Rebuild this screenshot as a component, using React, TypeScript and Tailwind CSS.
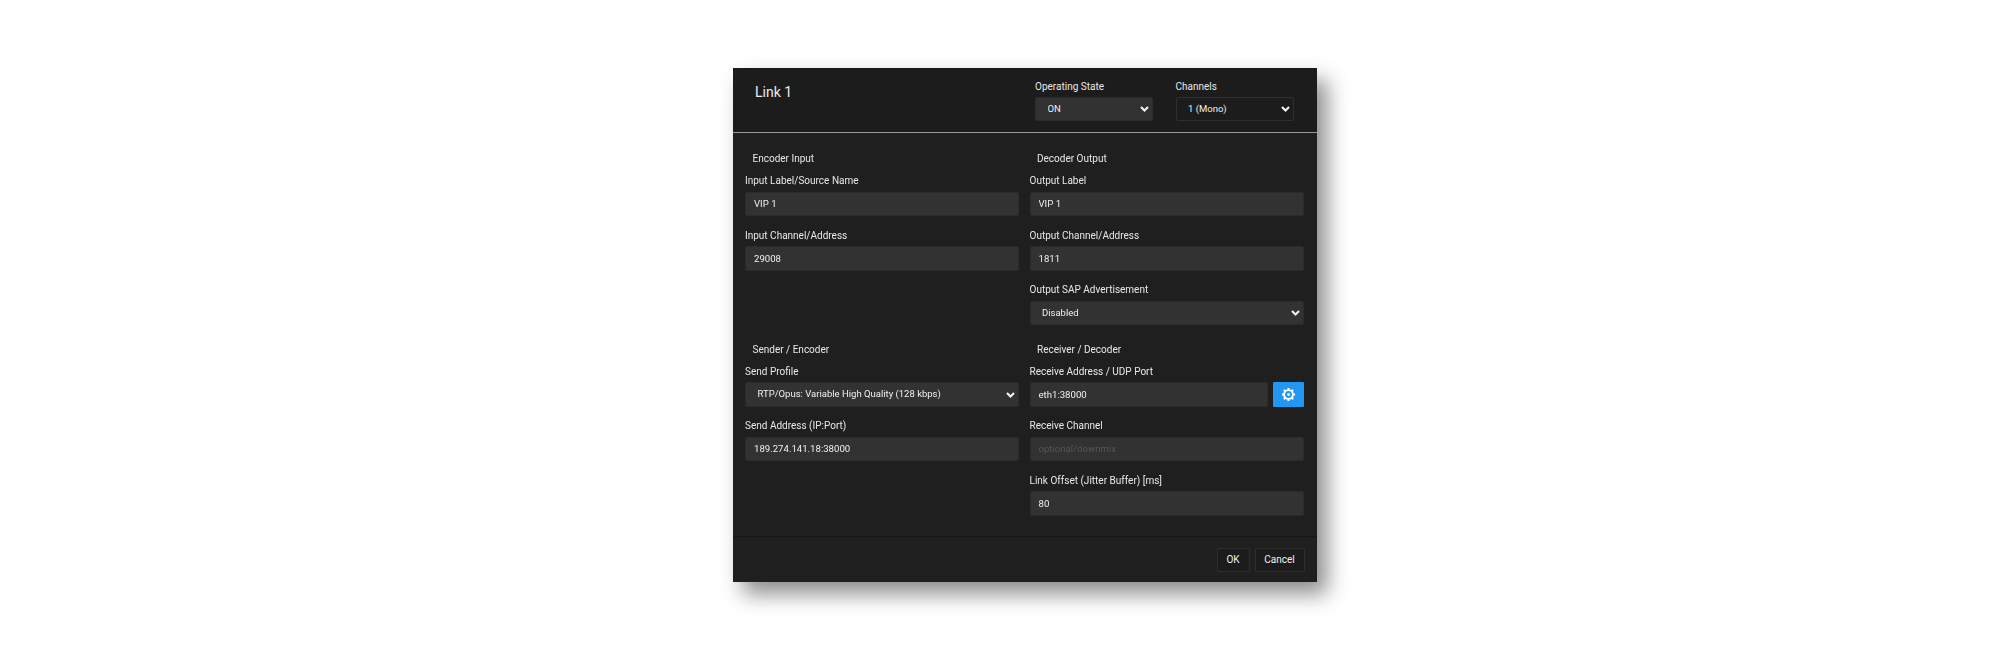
import React from "react";

const labelCls = "block h-4 mb-[2.5px] text-[10px] leading-4 text-[#e8e8e8]";
const fieldBox =
  "block w-full h-[24.5px] rounded-[2px] border border-[#2b2b2b] bg-[#323232] text-[9.6px] text-[#f0f0f0] outline-none";

function Chevron() {
  return (
    <svg width="9" height="6" viewBox="0 0 9 6" fill="none" stroke="#f4f4f4" strokeWidth="2.1" className="absolute right-[4px] top-[9.5px] pointer-events-none">
      <path d="M1 1L4.5 4.5L8 1" />
    </svg>
  );
}

function Select({ value, className = "" }: { value: string; className?: string }) {
  return (
    <div className="relative">
      <select
        defaultValue={value}
        className={`block w-full h-[24.5px] appearance-none rounded-[2px] border pl-[11.5px] text-[9.5px] text-[#f0f0f0] outline-none ${className || "border-[#2b2b2b] bg-[#323232]"}`}
      >
        <option>{value}</option>
      </select>
      <Chevron />
    </div>
  );
}

function Input({ value, placeholder }: { value?: string; placeholder?: string }) {
  return (
    <input
      readOnly
      defaultValue={value}
      placeholder={placeholder}
      className={`${fieldBox} pl-[8px] placeholder:text-[#555555]`}
    />
  );
}

function Field({ label, children }: { label: string; children: React.ReactNode }) {
  return (
    <div className="mb-[11.5px]">
      <label className={labelCls}>{label}</label>
      {children}
    </div>
  );
}

function SectionTitle({ children, mb }: { children: string; mb: string }) {
  return <div className={`h-4 pl-[7.5px] text-[10px] leading-4 text-[#e8e8e8] ${mb}`}>{children}</div>;
}

function FooterButton({ children, w }: { children: string; w: string }) {
  return (
    <button className={`h-6 ${w} rounded-[2px] border border-[#2f2f2f] bg-[#1c1c1c] text-[10px] text-[#f0f0f0]`}>
      {children}
    </button>
  );
}

function Gear() {
  return (
    <svg width="15" height="15" viewBox="0 0 24 24" fill="none" stroke="#ffffff">
      <circle cx="12" cy="12" r="7" strokeWidth="3" />
      <path strokeWidth="3.4" d="M12 1.5V5M12 19v3.5M1.5 12H5M19 12h3.5M4.6 4.6l2.5 2.5M16.9 16.9l2.5 2.5M4.6 19.4l2.5-2.5M16.9 7.1l2.5-2.5" />
      <circle cx="12" cy="12" r="2.2" fill="#ffffff" stroke="none" />
    </svg>
  );
}

export default function App() {
  return (
    <div className="min-h-screen bg-white pl-[733px] pt-[68px] font-['Roboto',sans-serif]">
      <div className="w-[584px] bg-[#1f1f1f] shadow-[10px_12px_20px_rgba(0,0,0,0.45)] blur-[0.35px]">
        <header className="box-content flex h-[63.5px] border-b-[1.5px] border-[#9a9a9a] bg-[#1c1c1c]">
          <div className="w-[302px] pl-[22px] pt-[15px] text-[14px] leading-[18px] text-[#ececec]">Link 1</div>
          <div className="w-[118px] pt-[11px]">
            <div className="h-4 mb-[1.5px] text-[10px] leading-4 text-[#e8e8e8]">Operating State</div>
            <Select value="ON" />
          </div>
          <div className="ml-[22.5px] w-[118.5px] pt-[11px]">
            <div className="h-4 mb-[1.5px] text-[10px] leading-4 text-[#e8e8e8]">Channels</div>
            <Select value="1 (Mono)" className="border-[#2f2f2f] bg-[#1c1c1c]" />
          </div>
        </header>

        <div className="px-[12px] pt-[18px] pb-[9px]">
          <section className="grid grid-cols-[273.5px_274.5px] gap-x-[11px]">
            <div>
              <SectionTitle mb="mb-[6.5px]">Encoder Input</SectionTitle>
              <Field label="Input Label/Source Name"><Input value="VIP 1" /></Field>
              <Field label="Input Channel/Address"><Input value="29008" /></Field>
            </div>
            <div>
              <SectionTitle mb="mb-[6.5px]">Decoder Output</SectionTitle>
              <Field label="Output Label"><Input value="VIP 1" /></Field>
              <Field label="Output Channel/Address"><Input value="1811" /></Field>
              <Field label="Output SAP Advertisement"><Select value="Disabled" /></Field>
            </div>
          </section>
          <section className="mt-[5.5px] grid grid-cols-[273.5px_274.5px] gap-x-[11px]">
            <div>
              <SectionTitle mb="mb-[5.5px]">Sender / Encoder</SectionTitle>
              <Field label="Send Profile"><Select value="RTP/Opus: Variable High Quality (128 kbps)" /></Field>
              <Field label="Send Address (IP:Port)"><Input value="189.274.141.18:38000" /></Field>
            </div>
            <div>
              <SectionTitle mb="mb-[5.5px]">Receiver / Decoder</SectionTitle>
              <Field label="Receive Address / UDP Port">
                <div className="flex gap-[5px]">
                  <div className="flex-1"><Input value="eth1:38000" /></div>
                  <button className="flex h-[24.5px] w-[31.5px] items-center justify-center rounded-[1px] bg-[#2196f3]">
                    <Gear />
                  </button>
                </div>
              </Field>
              <Field label="Receive Channel"><Input placeholder="optional/downmix" /></Field>
              <Field label="Link Offset (Jitter Buffer) [ms]"><Input value="80" /></Field>
            </div>
          </section>
        </div>

        <footer className="flex justify-end gap-[5px] border-t border-[#151515] pt-[10.5px] pb-[10px] pr-[12.5px]">
          <FooterButton w="w-[33px]">OK</FooterButton>
          <FooterButton w="w-[50px]">Cancel</FooterButton>
        </footer>
      </div>
    </div>
  );
}
